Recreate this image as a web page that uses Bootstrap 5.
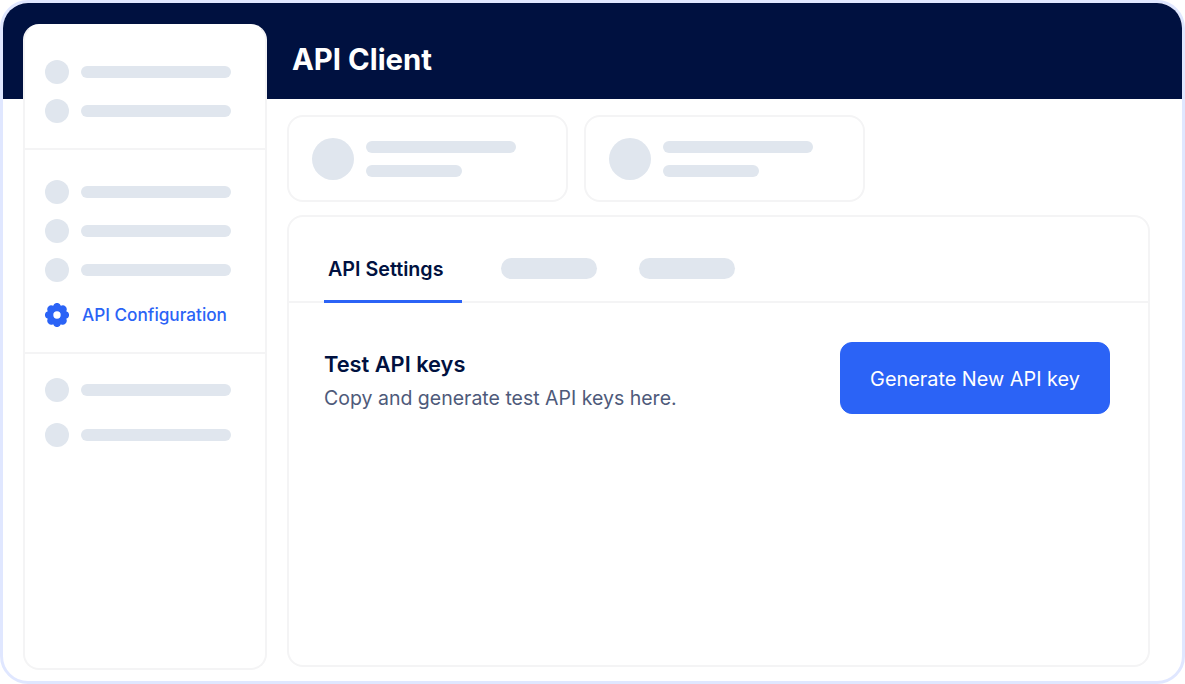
<!DOCTYPE html>
<html lang="en">
<head>
    <meta charset="UTF-8">
    <meta name="viewport" content="width=device-width, initial-scale=1.0">
    <title>API Client</title>
    <link href="https://cdn.jsdelivr.net/npm/bootstrap@5.3.0/dist/css/bootstrap.min.css" rel="stylesheet">
    <style>
        html, body {
            height: 100%;
            background: #fff;
        }
        body {
            font-family: "Inter", "Liberation Sans", sans-serif;
            overflow: hidden;
        }
        .app-frame {
            height: 684px;
            border: 3px solid #e0e7ff;
            border-radius: 28px;
            overflow: hidden;
            display: grid;
            grid-template-columns: 265px 1fr;
            grid-template-rows: 96px 1fr;
        }
        .app-header {
            grid-column: 1 / 3;
            grid-row: 1;
            background: #001140;
            padding: 17px 0 0 289px;
        }
        .app-header h1 {
            color: #fff;
            font-size: 29.3px;
            font-weight: 700;
            margin: 0;
        }
        .side-panel {
            grid-column: 1;
            grid-row: 1 / 3;
            z-index: 1;
            margin: 21px 1px 11px 20px;
            border: 2px solid #f4f4f5;
            border-top-color: #fff;
            border-radius: 16px;
            background: #fff;
        }
        .side-group {
            padding: 0 34px 0 20px;
        }
        .side-group + .side-group {
            border-top: 2px solid #f4f4f5;
        }
        .side-row {
            display: flex;
            align-items: center;
            gap: 12px;
            height: 24px;
        }
        .dot-sm, .dot-lg {
            flex: none;
            border-radius: 50%;
            background: #e0e6ee;
        }
        .dot-sm { width: 24px; height: 24px; }
        .dot-lg { width: 42px; height: 42px; }
        .skeleton {
            display: block;
            height: 12px;
            border-radius: 6px;
            background: #e0e6ee;
        }
        .w-150 { width: 150px; }
        .w-96 { width: 96px; }
        .side-link {
            color: #2b63f6;
            font-size: 17.2px;
            font-weight: 500;
            gap: 13px;
            white-space: nowrap;
        }
        .side-link svg { flex: none; }
        .s1 { height: 122px; padding-top: 34px; gap: 15px; }
        .s2 { height: 204px; padding-top: 30px; gap: 15px; }
        .s2 .side-link { margin-top: 6px; }
        .s3 { padding-top: 24px; gap: 21px; }
        .content-area {
            grid-column: 2;
            grid-row: 2;
            padding: 16px 32px 15px 19px;
            min-height: 0;
        }
        .stat-card {
            width: 281px;
            height: 87px;
            border: 2px solid #f4f4f5;
            border-radius: 16px;
            padding-left: 23px;
        }
        .stat-lines { gap: 12px; margin-left: 4px; }
        .main-card {
            height: 452px;
            margin-top: 13px;
            border: 2px solid #f4f4f5;
            border-radius: 16px;
        }
        .tab-bar {
            height: 86px;
            padding-left: 35px;
            border-bottom: 2px solid #f4f4f5;
            gap: 39px;
        }
        .tab-active {
            width: 138px;
            height: 86px;
            padding: 38px 0 0 4px;
            border-bottom: 3px solid #2b63f6;
            margin-bottom: -2px;
            color: #001140;
            font-size: 19.7px;
            font-weight: 600;
            white-space: nowrap;
        }
        .tab-ghost {
            width: 96px;
            height: 21px;
            margin-top: 18px;
            border-radius: 11px;
            background: #e0e6ee;
        }
        .tab-ghost + .tab-ghost { margin-left: 3px; }
        .key-row {
            padding: 39px 38px 0 35px;
        }
        .key-copy { padding-top: 7px; }
        .key-row h2 {
            color: #001140;
            font-size: 21.8px;
            font-weight: 600;
            margin: 0 0 4px;
            line-height: 30px;
        }
        .key-row p {
            color: #4e5a7a;
            font-size: 19.5px;
            margin: 0;
            line-height: 30px;
        }
        .btn-generate {
            width: 270px;
            height: 72px;
            padding-top: 10px;
            background: #2b63f6;
            border-color: #2b63f6;
            border-radius: 12px;
            color: #fff;
            font-size: 19.85px;
        }
    </style>
</head>
<body>
<div class="app-frame">
    <header class="app-header d-flex align-items-center">
        <h1>API Client</h1>
    </header>

    <!-- Sidebar -->
    <aside class="side-panel">
        <div class="side-group d-flex flex-column s1">
            <div class="side-row"><span class="dot-sm"></span><span class="skeleton w-150"></span></div>
            <div class="side-row"><span class="dot-sm"></span><span class="skeleton w-150"></span></div>
        </div>
        <div class="side-group d-flex flex-column s2">
            <div class="side-row"><span class="dot-sm"></span><span class="skeleton w-150"></span></div>
            <div class="side-row"><span class="dot-sm"></span><span class="skeleton w-150"></span></div>
            <div class="side-row"><span class="dot-sm"></span><span class="skeleton w-150"></span></div>
            <div class="side-row side-link">
                <svg width="24" height="24" viewBox="0 0 24 24" fill="#2b63f6" fill-rule="evenodd"><path d="M21.24 15.83A4 4 0 0 1 15.83 21.24A4 4 0 0 1 8.17 21.24A4 4 0 0 1 2.76 15.83A4 4 0 0 1 2.76 8.17A4 4 0 0 1 8.17 2.76A4 4 0 0 1 15.83 2.76A4 4 0 0 1 21.24 8.17A4 4 0 0 1 21.24 15.83ZM12 8.3a3.7 3.7 0 1 0 0 7.4a3.7 3.7 0 0 0 0-7.4Z"/></svg>
                API Configuration
            </div>
        </div>
        <div class="side-group d-flex flex-column s3">
            <div class="side-row"><span class="dot-sm"></span><span class="skeleton w-150"></span></div>
            <div class="side-row"><span class="dot-sm"></span><span class="skeleton w-150"></span></div>
        </div>
    </aside>

    <main class="content-area">
        <div class="d-flex gap-3">
            <div class="stat-card d-flex align-items-center gap-2">
                <span class="dot-lg"></span>
                <div class="d-flex flex-column stat-lines">
                    <span class="skeleton w-150"></span>
                    <span class="skeleton w-96"></span>
                </div>
            </div>
            <div class="stat-card d-flex align-items-center gap-2">
                <span class="dot-lg"></span>
                <div class="d-flex flex-column stat-lines">
                    <span class="skeleton w-150"></span>
                    <span class="skeleton w-96"></span>
                </div>
            </div>
        </div>

        <section class="main-card">
            <div class="tab-bar d-flex align-items-center">
                <div class="tab-active">API Settings</div>
                <div class="tab-ghost"></div>
                <div class="tab-ghost"></div>
            </div>
            <div class="key-row d-flex justify-content-between align-items-start">
                <div class="key-copy">
                    <h2>Test API keys</h2>
                    <p>Copy and generate test API keys here.</p>
                </div>
                <button class="btn btn-primary btn-generate" type="button">Generate New API key</button>
            </div>
        </section>
    </main>
</div>
<script src="https://cdn.jsdelivr.net/npm/bootstrap@5.3.0/dist/js/bootstrap.bundle.min.js"></script>
</body>
</html>
